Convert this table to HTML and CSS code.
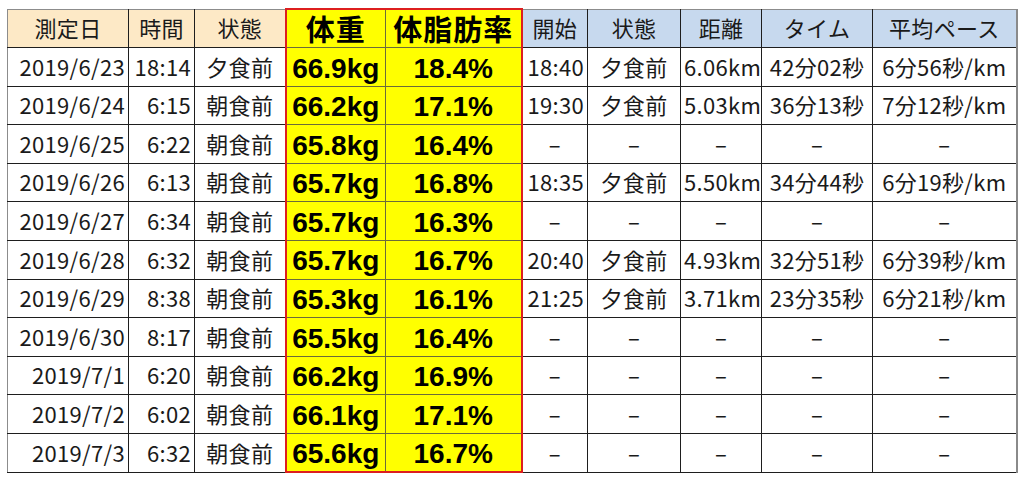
FILE: index.html
```html
<!DOCTYPE html>
<html lang="ja">
<head>
<meta charset="utf-8">
<link rel="stylesheet" href="styles.css">
</head>
<body>
<table class="log">
  <colgroup>
    <col class="c-date"><col class="c-time"><col class="c-state"><col class="c-weight"><col class="c-fat">
    <col class="c-start"><col class="c-rstate"><col class="c-dist"><col class="c-tm"><col class="c-pace">
  </colgroup>
  <thead>
    <tr>
      <th class="hb">測定日</th><th class="hb">時間</th><th class="hb">状態</th>
      <th class="hy wl">体重</th><th class="hy wr">体脂肪率</th>
      <th class="hl">開始</th><th class="hl">状態</th><th class="hl">距離</th><th class="hl">タイム</th><th class="hl edge">平均ペース</th>
    </tr>
  </thead>
  <tbody>
    <tr><td class="r">2019/6/23</td><td class="r">18:14</td><td class="c">夕食前</td><td class="y wl">66.9kg</td><td class="y wr">18.4%</td><td class="r">18:40</td><td class="c">夕食前</td><td class="c">6.06km</td><td class="c">42分02秒</td><td class="c edge">6分56秒/km</td></tr>
    <tr><td class="r">2019/6/24</td><td class="r">6:15</td><td class="c">朝食前</td><td class="y wl">66.2kg</td><td class="y wr">17.1%</td><td class="r">19:30</td><td class="c">夕食前</td><td class="c">5.03km</td><td class="c">36分13秒</td><td class="c edge">7分12秒/km</td></tr>
    <tr><td class="r">2019/6/25</td><td class="r">6:22</td><td class="c">朝食前</td><td class="y wl">65.8kg</td><td class="y wr">16.4%</td><td class="c">–</td><td class="c">–</td><td class="c">–</td><td class="c">–</td><td class="c edge">–</td></tr>
    <tr><td class="r">2019/6/26</td><td class="r">6:13</td><td class="c">朝食前</td><td class="y wl">65.7kg</td><td class="y wr">16.8%</td><td class="r">18:35</td><td class="c">夕食前</td><td class="c">5.50km</td><td class="c">34分44秒</td><td class="c edge">6分19秒/km</td></tr>
    <tr><td class="r">2019/6/27</td><td class="r">6:34</td><td class="c">朝食前</td><td class="y wl">65.7kg</td><td class="y wr">16.3%</td><td class="c">–</td><td class="c">–</td><td class="c">–</td><td class="c">–</td><td class="c edge">–</td></tr>
    <tr><td class="r">2019/6/28</td><td class="r">6:32</td><td class="c">朝食前</td><td class="y wl">65.7kg</td><td class="y wr">16.7%</td><td class="r">20:40</td><td class="c">夕食前</td><td class="c">4.93km</td><td class="c">32分51秒</td><td class="c edge">6分39秒/km</td></tr>
    <tr><td class="r">2019/6/29</td><td class="r">8:38</td><td class="c">朝食前</td><td class="y wl">65.3kg</td><td class="y wr">16.1%</td><td class="r">21:25</td><td class="c">夕食前</td><td class="c">3.71km</td><td class="c">23分35秒</td><td class="c edge">6分21秒/km</td></tr>
    <tr><td class="r">2019/6/30</td><td class="r">8:17</td><td class="c">朝食前</td><td class="y wl">65.5kg</td><td class="y wr">16.4%</td><td class="c">–</td><td class="c">–</td><td class="c">–</td><td class="c">–</td><td class="c edge">–</td></tr>
    <tr><td class="r">2019/7/1</td><td class="r">6:20</td><td class="c">朝食前</td><td class="y wl">66.2kg</td><td class="y wr">16.9%</td><td class="c">–</td><td class="c">–</td><td class="c">–</td><td class="c">–</td><td class="c edge">–</td></tr>
    <tr><td class="r">2019/7/2</td><td class="r">6:02</td><td class="c">朝食前</td><td class="y wl">66.1kg</td><td class="y wr">17.1%</td><td class="c">–</td><td class="c">–</td><td class="c">–</td><td class="c">–</td><td class="c edge">–</td></tr>
    <tr class="last"><td class="r">2019/7/3</td><td class="r">6:32</td><td class="c">朝食前</td><td class="y wl">65.6kg</td><td class="y wr">16.7%</td><td class="c">–</td><td class="c">–</td><td class="c">–</td><td class="c">–</td><td class="c edge">–</td></tr>
  </tbody>
</table>
</body>
</html>
```

FILE: styles.css
```css
html, body {
  margin: 0;
  padding: 0;
  background: #ffffff;
}
body {
  padding: 8px 0 0 7px;
  font-family: "Noto Sans CJK JP", "Noto Sans", sans-serif;
  color: #1a1a1a;
}
.log {
  border-collapse: collapse;
  table-layout: fixed;
  width: 1009px;
}
.c-date { width: 121px; }
.c-time { width: 66px; }
.c-state { width: 91px; }
.c-weight { width: 100px; }
.c-fat { width: 136px; }
.c-start { width: 66px; }
.c-rstate { width: 93px; }
.c-dist { width: 81px; }
.c-tm { width: 111px; }
.c-pace { width: 144px; }

.log tr { height: 38.6px; }
.log th, .log td {
  border: 1px solid #1e1e1e;
  padding: 0 3px 2px 3px;
  font-size: 22px;
  font-weight: 400;
  line-height: 1.2;
  white-space: nowrap;
  vertical-align: middle;
  letter-spacing: 0.3px;
}
.log th {
  text-align: center;
  border-top-color: #8c8c8c;
}
.log th:first-child, .log td:first-child { border-left-color: #8c8c8c; }
.log .hb { background: #fde9c6; }
.log .hl { background: #c7d9ee; }
.log .r { text-align: right; }
.log .c { text-align: center; }
.log .hy {
  background: #ffff00;
  font-weight: 700;
  font-size: 29px;
  line-height: 1.2;
  color: #000;
  letter-spacing: 1px;
  padding: 0 2px;
  border-color: #6b6b3a;
}
.log .y {
  background: #ffff00;
  color: #000;
  text-align: center;
  font-family: "Liberation Sans", "Noto Sans CJK JP", sans-serif;
  font-weight: 700;
  font-size: 28px;
  line-height: 1.15;
  letter-spacing: 0;
  vertical-align: bottom;
  padding: 0 2px 1px 2px;
  border-color: #6b6b3a;
}
.log .wl { border-left: 2px solid #dd1f1f; }
.log .wr { border-right: 2px solid #dd1f1f; }
.log .hy { border-top: 2px solid #dd1f1f; }
.log .last .y { border-bottom: 2px solid #dd1f1f; }
.log .edge { border-right: 2px solid #8a8a8a; }
```
